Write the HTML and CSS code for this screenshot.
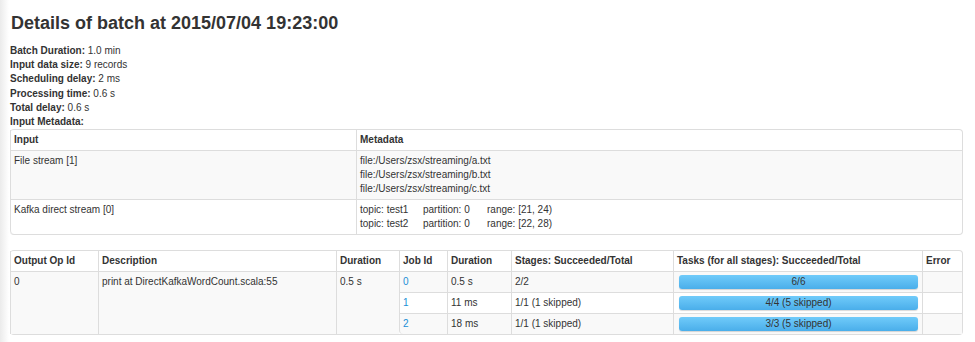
FILE: index.html
```html
<!DOCTYPE html>
<html lang="en">
<head>
    <meta charset="UTF-8">
    <title>Batch Details</title>
    <link rel="stylesheet" href="styles.css">
</head>
<body>
    <div class="page">
        <h3 class="page-title">Details of batch at 2015/07/04 19:23:00</h3>

        <ul class="summary">
            <li><strong>Batch Duration:</strong> 1.0 min</li>
            <li><strong>Input data size:</strong> 9 records</li>
            <li><strong>Scheduling delay:</strong> 2 ms</li>
            <li><strong>Processing time:</strong> 0.6 s</li>
            <li><strong>Total delay:</strong> 0.6 s</li>
            <li><strong>Input Metadata:</strong></li>
        </ul>

        <table class="table input-table">
            <thead>
                <tr>
                    <th class="col-input">Input</th>
                    <th>Metadata</th>
                </tr>
            </thead>
            <tbody>
                <tr>
                    <td>File stream [1]</td>
                    <td>
                        file:/Users/zsx/streaming/a.txt<br>
                        file:/Users/zsx/streaming/b.txt<br>
                        file:/Users/zsx/streaming/c.txt
                    </td>
                </tr>
                <tr>
                    <td>Kafka direct stream [0]</td>
                    <td>
                        <span class="meta-topic">topic: test1</span><span class="meta-part">partition: 0</span>range: [21, 24)<br>
                        <span class="meta-topic">topic: test2</span><span class="meta-part">partition: 0</span>range: [22, 28)
                    </td>
                </tr>
            </tbody>
        </table>

        <table class="table jobs-table">
            <thead>
                <tr>
                    <th class="col-op">Output Op Id</th>
                    <th class="col-desc">Description</th>
                    <th class="col-dur">Duration</th>
                    <th class="col-job">Job Id</th>
                    <th class="col-jdur">Duration</th>
                    <th class="col-stages">Stages: Succeeded/Total</th>
                    <th class="col-tasks">Tasks (for all stages): Succeeded/Total</th>
                    <th>Error</th>
                </tr>
            </thead>
            <tbody>
                <tr>
                    <td rowspan="3">0</td>
                    <td rowspan="3">print at DirectKafkaWordCount.scala:55</td>
                    <td rowspan="3">0.5 s</td>
                    <td><a href="#">0</a></td>
                    <td>0.5 s</td>
                    <td>2/2</td>
                    <td><div class="progress"><span>6/6</span></div></td>
                    <td></td>
                </tr>
                <tr>
                    <td><a href="#">1</a></td>
                    <td>11 ms</td>
                    <td>1/1 (1 skipped)</td>
                    <td><div class="progress"><span>4/4 (5 skipped)</span></div></td>
                    <td></td>
                </tr>
                <tr>
                    <td><a href="#">2</a></td>
                    <td>18 ms</td>
                    <td>1/1 (1 skipped)</td>
                    <td><div class="progress"><span>3/3 (5 skipped)</span></div></td>
                    <td></td>
                </tr>
            </tbody>
        </table>
    </div>
</body>
</html>
```

FILE: styles.css
```css
body {
    margin: 0;
    font-family: "Liberation Sans", Arial, sans-serif;
    font-size: 10px;
    line-height: 14px;
    color: #333;
    background: linear-gradient(to right, #ebebeb 0, #fff 9px);
}

.page {
    padding: 0 12px 0 10px;
}

.page-title {
    margin: 0;
    padding-top: 11px;
    padding-left: 1px;
    font-size: 18px;
    line-height: 24px;
    font-weight: bold;
    color: #333;
}

.summary {
    list-style: none;
    margin: 9px 0 0 0;
    padding: 0;
}

.summary li {
    line-height: 14.2px;
}

.table {
    width: 100%;
    border-collapse: separate;
    border-spacing: 0;
    border: 1px solid #ddd;
    border-left: 0;
    border-radius: 4px;
    font-size: 10px;
}

.table th,
.table td {
    padding: 3px 4px 3px 3px;
    line-height: 14px;
    text-align: left;
    vertical-align: top;
    border-left: 1px solid #ddd;
    border-top: 1px solid #ddd;
}

.table th {
    font-weight: bold;
    border-top: 0;
}

.table tbody tr:nth-child(odd) td {
    background: #f9f9f9;
}

.table tbody tr:last-child td:first-child {
    border-bottom-left-radius: 4px;
}

.table a {
    color: #1a8fd6;
    text-decoration: none;
}

.input-table .col-input {
    width: 338px;
}

.meta-topic {
    display: inline-block;
    width: 63px;
}

.meta-part {
    display: inline-block;
    width: 64px;
}

.jobs-table {
    margin-top: 15px;
}

.col-op { width: 80px; }
.col-desc { width: 230px; }
.col-dur { width: 55px; }
.col-job { width: 40px; }
.col-jdur { width: 56px; }
.col-stages { width: 154px; }
.col-tasks { width: 241px; }

.progress {
    height: 14px;
    margin: 0 0 0 2px;
    border-radius: 3px;
    background: linear-gradient(to bottom, #70cbfa, #4aaeea);
    box-shadow: 0 1px 1px rgba(0, 0, 0, 0.15);
    text-align: center;
    line-height: 14px;
    color: #333;
}
```
